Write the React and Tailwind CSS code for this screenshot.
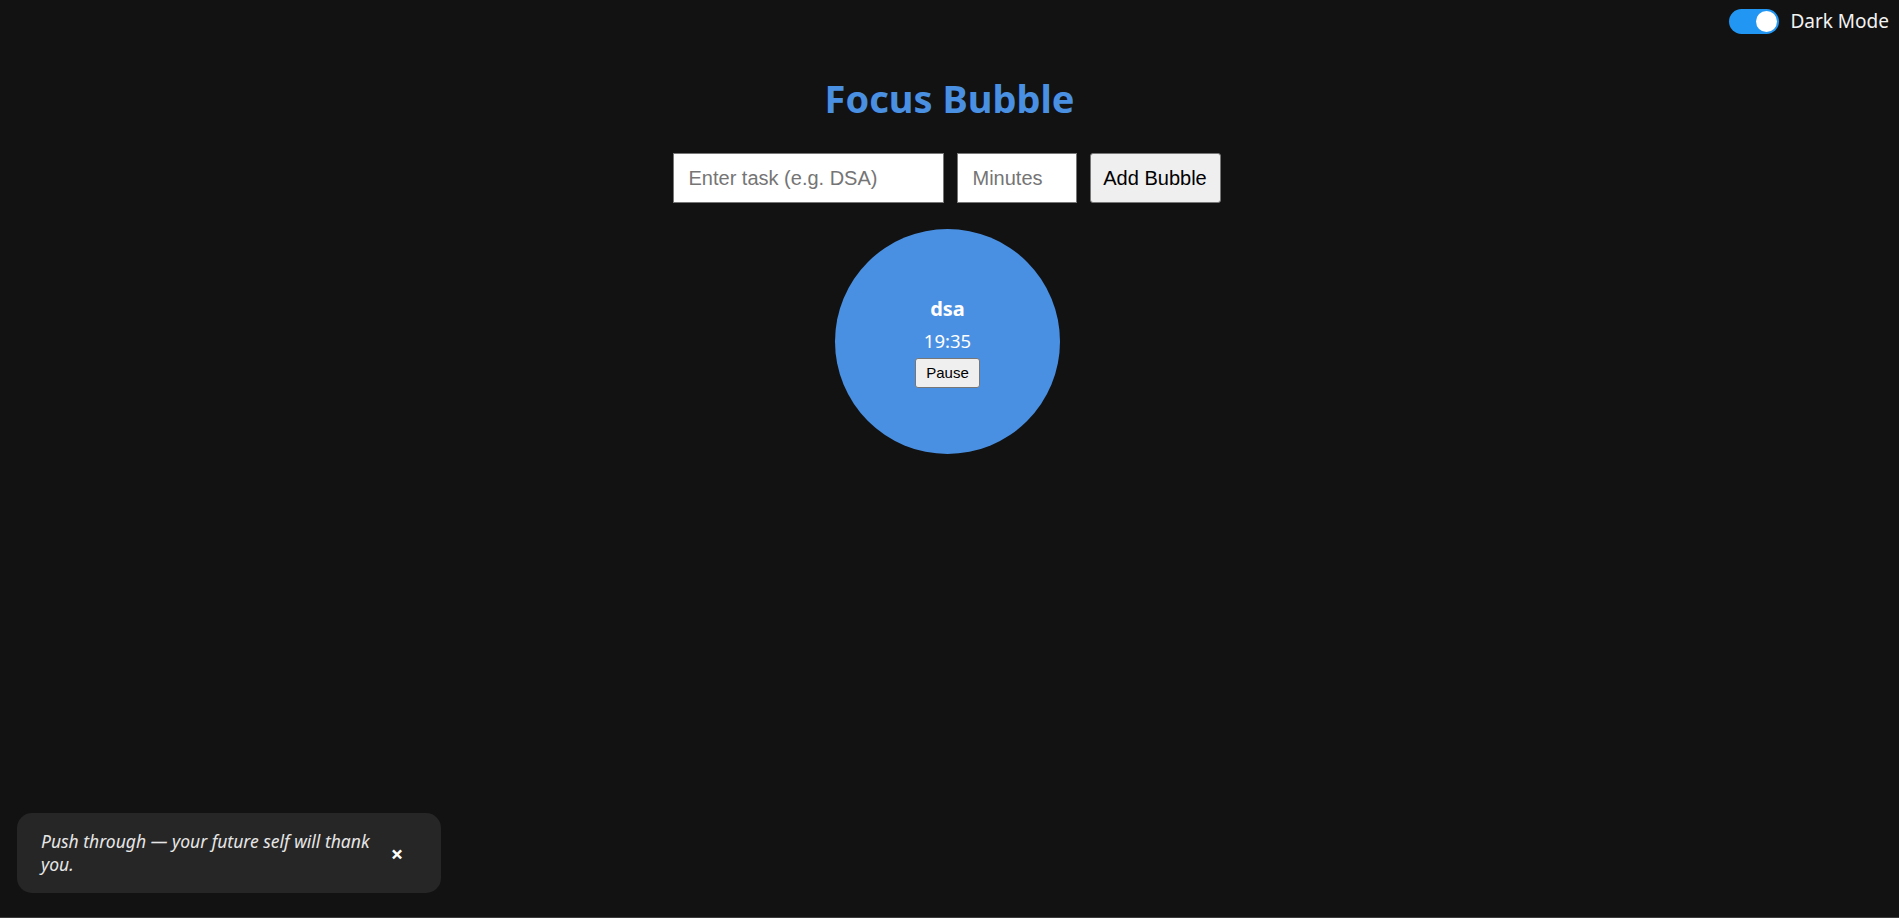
import { useState } from "react";

const sans = { fontFamily: "'Noto Sans', 'Open Sans', sans-serif" };

function Toggle({ on, onChange }) {
    return (
        <button onClick={() => onChange(!on)}
            className={"relative w-[50px] h-[25px] rounded-full flex items-center px-[2px] " + (on ? "bg-[#2196f3] justify-end" : "bg-[#ccc] justify-start")}>
            <span className="w-[21px] h-[21px] rounded-full bg-white block" />
        </button>
    );
}

function Bubble({ task, time }) {
    const [paused, setPaused] = useState(false);
    return (
        <div className="w-[225px] h-[225px] rounded-full bg-[#4a90e2] flex flex-col items-center justify-center text-white">
            <div className="text-[20px] leading-[24px] font-bold mb-[8px] mt-[2px]">{task}</div>
            <div className="text-[18.5px] leading-[23px] mb-[6px]">{time}</div>
            <button onClick={() => setPaused(!paused)}
                className="h-[30px] w-[65px] bg-[#efefef] border border-[#767676] rounded-[3px] text-black text-[15px] font-['Liberation_Sans',Arial,sans-serif]">
                {paused ? "Resume" : "Pause"}
            </button>
        </div>
    );
}

export default function App() {
    const [dark, setDark] = useState(true);
    const [toast, setToast] = useState(true);

    return (
        <div className="relative w-full h-[918px] bg-[#121212] overflow-hidden border-b border-[#3c3c3c]" style={sans}>

            {/* Theme switch */}
            <div className="absolute top-[9px] right-[10px] flex items-center gap-[11px]">
                <Toggle on={dark} onChange={setDark} />
                <span className="text-[19px] leading-[25px] text-[#f2f2f2]">Dark Mode</span>
            </div>

            <div className="flex flex-col items-center pt-[74px]">
                <h1 className="text-[38px] leading-[48px] font-bold text-[#4a90e2]">Focus Bubble</h1>

                <div className="flex gap-[13px] mt-[31px] mr-[6px] font-['Liberation_Sans',Arial,sans-serif] text-[20px]">
                    <input placeholder="Enter task (e.g. DSA)"
                        className="w-[271px] h-[50px] px-[15px] bg-white border border-[#767676] text-black placeholder:text-[#757575] outline-none" />
                    <input placeholder="Minutes" type="number"
                        className="w-[120px] h-[50px] px-[15px] bg-white border border-[#767676] text-black placeholder:text-[#757575] outline-none" />
                    <button className="w-[131px] h-[50px] bg-[#efefef] border border-[#767676] rounded-[3px] text-black">
                        Add Bubble
                    </button>
                </div>
            </div>

            <div className="flex justify-center mt-[26px] pr-[4px]">
                <Bubble task="dsa" time="19:35" />
            </div>

            {/* Motivation toast */}
            {toast && (
                <div className="absolute left-[17px] bottom-[24px] w-[424px] h-[80px] rounded-[15px] bg-[#262626] flex items-center pl-[24px] pr-[24px]">
                    <p className="flex-1 italic text-[17.5px] leading-[23px] text-[#e6e6e6]">
                        Push through — your future self will thank you.
                    </p>
                    <button onClick={() => setToast(false)}
                        className="w-[40px] text-white text-[22px] font-bold leading-none">
                        ×
                    </button>
                </div>
            )}
        </div>
    );
}
